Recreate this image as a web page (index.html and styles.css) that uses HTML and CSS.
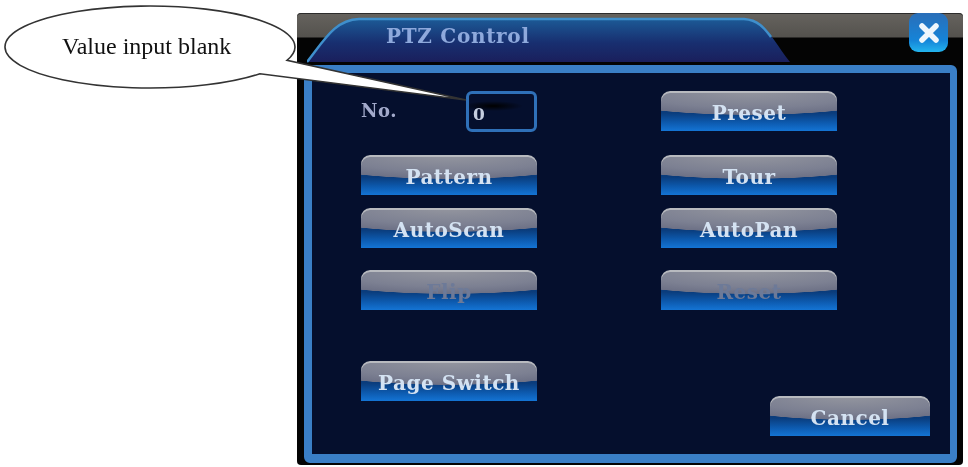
FILE: index.html
```html
<!DOCTYPE html>
<html lang="en">

<head>
  <meta charset="utf-8">
  <title>PTZ Control</title>
  <link rel="stylesheet" href="styles.css">
</head>

<body>
  <div class="window">
    <div class="titlebar">
      <svg class="tab-shape" width="490" height="46" viewBox="0 0 490 46">
        <defs>
          <linearGradient id="tabFill" x1="0" y1="0" x2="0" y2="1">
            <stop offset="0" stop-color="#1c5a96" />
            <stop offset="0.55" stop-color="#182f70" />
            <stop offset="1" stop-color="#1a1f5c" />
          </linearGradient>
        </defs>
        <path d="M0 45 C18 22 28 3 52 2 L437 2 C458 2 466 24 483 45 Z" fill="url(#tabFill)" />
        <path d="M0 45 C18 22 28 3 52 2 L437 2 C452 3 458 12 464 20" fill="none" stroke="#3f8fcc" stroke-width="2.5" />
      </svg>
      <span class="tab-title">PTZ Control</span>
      <div class="close-btn">
        <svg width="24" height="24" viewBox="0 0 24 24">
          <path d="M5 5 L19 19 M19 5 L5 19" stroke="#eef6fc" stroke-width="5.5" stroke-linecap="round" />
        </svg>
      </div>
    </div>

    <div class="panel">
      <div class="rows">
        <div class="field">
          <span class="field-label">No.</span>
          <div class="field-input">0</div>
        </div>
        <div class="btn">Preset</div>
        <div class="btn">Pattern</div>
        <div class="btn">Tour</div>
        <div class="btn">AutoScan</div>
        <div class="btn">AutoPan</div>
        <div class="btn btn-disabled">Flip</div>
        <div class="btn btn-disabled">Reset</div>
      </div>
      <div class="footer">
        <div class="btn">Page Switch</div>
        <div class="btn btn-cancel">Cancel</div>
      </div>
    </div>
  </div>

  <svg class="callout" width="480" height="110" viewBox="0 0 480 110">
    <path d="M260 73.7 A145 41 0 1 1 287 60.4 L466 100 Z" fill="#fff" stroke="#333" stroke-width="1.6" />
    <text x="62" y="54">Value input blank</text>
  </svg>
</body>

</html>
```

FILE: styles.css
```css
body {
  margin: 0;
  background-color: #fff;
}

.window {
  width: 666px;
  height: 452px;
  margin: 13px 0 0 297px;
  border-radius: 4px;
  background: linear-gradient(#66635e 0, #54524e 24px, #040404 25px);
  box-shadow: inset 0 1px 0 #2c2c2c;
  font-family: "DejaVu Serif", serif;
  filter: blur(0.5px);
}

.titlebar {
  position: relative;
  height: 52px;
}

.tab-shape {
  position: absolute;
  left: 10px;
  top: 4px;
}

.tab-title {
  position: absolute;
  left: 89px;
  top: 11px;
  color: #8ea9dc;
  font-size: 20px;
  font-weight: bold;
  letter-spacing: 0.7px;
}

.close-btn {
  position: absolute;
  left: 612px;
  top: 0;
  width: 39px;
  height: 39px;
  display: flex;
  align-items: center;
  justify-content: center;
  border-radius: 9px;
  background: linear-gradient(#2a6eb8, #1584d8 70%, #23b4ee);
}

.panel {
  width: 638px;
  height: 381px;
  margin-left: 7px;
  display: flex;
  flex-direction: column;
  border: solid #3a7fc6;
  border-width: 8px 7px 9px 8px;
  border-radius: 6px;
  background-color: #050f2d;
}

.rows {
  display: grid;
  grid-template-columns: 176px 176px;
  grid-template-rows: 64px 53px 62px 91px;
  column-gap: 124px;
  align-items: start;
  margin: 18px 0 0 49px;
}

.field {
  display: flex;
  justify-content: space-between;
  align-items: center;
  height: 41px;
}

.field-label {
  margin-top: -2px;
  color: #a3aacb;
  font-size: 18px;
  font-weight: bold;
  letter-spacing: 0.5px;
}

.field-input {
  width: 65px;
  height: 35px;
  border: 3px solid #2f70b8;
  border-radius: 6px;
  background: radial-gradient(ellipse 30px 5px at 24px 12px, #000 0, transparent 100%);
  color: #c6cee0;
  font-size: 17px;
  font-weight: bold;
  line-height: 41px;
  text-indent: 4px;
}

.btn {
  height: 40px;
  border-radius: 9px 9px 0 0;
  background:
    radial-gradient(ellipse 90% 60% at 50% 0, #94969f 0, #7c8092 70%, #6d7186 98%, transparent 100%),
    linear-gradient(#0a3c7c 55%, #0d5bb0 80%, #1474d4 100%);
  box-shadow: inset 0 2px 0 #b8babf;
  color: #d4e2f2;
  font-size: 20px;
  font-weight: bold;
  letter-spacing: 0.5px;
  line-height: 44px;
  text-align: center;
}

.btn-disabled {
  color: #6d7a98;
}

.footer {
  display: flex;
  justify-content: space-between;
  align-items: flex-start;
  margin: 0 20px 0 49px;
}

.footer .btn {
  width: 176px;
}

.footer .btn-cancel {
  width: 160px;
  margin-top: 35px;
}

.callout {
  position: absolute;
  left: 0;
  top: 0;
  filter: blur(0.4px);
}

.callout text {
  fill: #111;
  font-family: "Liberation Serif", serif;
  font-size: 24px;
}
```
